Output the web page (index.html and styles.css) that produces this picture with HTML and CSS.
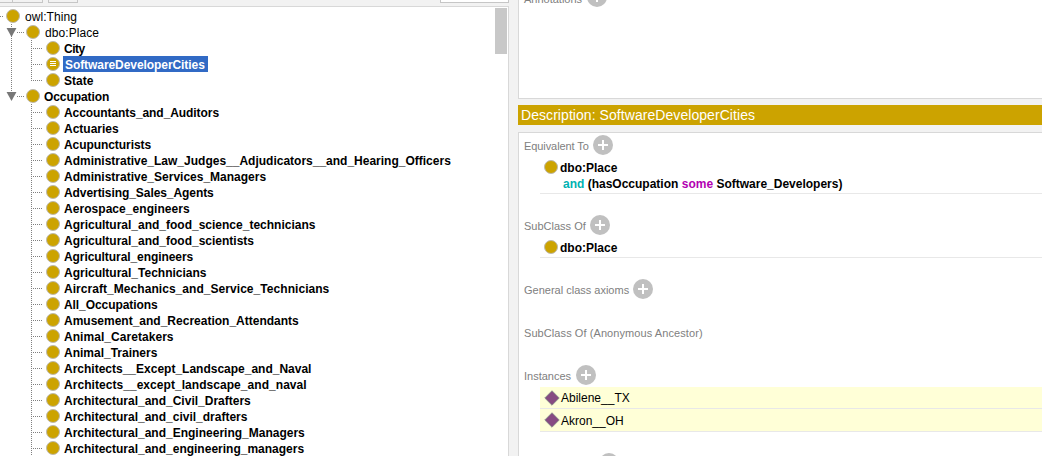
FILE: index.html
```
<!DOCTYPE html>
<html lang="en">
<head>
<meta charset="utf-8">
<title>Ontology editor</title>
<link rel="stylesheet" href="styles.css">
</head>
<body>
<main class="app">
  <section class="hierarchy">
    <div class="toolbar"><i class="tool narrow"></i><i class="tool"></i><i class="tool spaced"></i><i class="search"></i></div>
    <div class="tree-panel">
      <ul class="tree">
        <li class="row root"><i class="dot"></i><span class="label plain">owl:Thing</span></li>
        <li class="row branch"><i class="arrow"></i><i class="dot"></i><span class="label plain">dbo:Place</span></li>
        <li class="row leaf"><i class="dot"></i><span class="label tighter">City</span></li>
        <li class="row leaf"><i class="dot defined"></i><span class="label selected tight">SoftwareDeveloperCities</span></li>
        <li class="row leaf last"><i class="dot"></i><span class="label">State</span></li>
        <li class="row branch end"><i class="arrow"></i><i class="dot"></i><span class="label tight">Occupation</span></li>
        <li class="row leaf sub"><i class="dot"></i><span class="label tight">Accountants_and_Auditors</span></li>
        <li class="row leaf sub"><i class="dot"></i><span class="label">Actuaries</span></li>
        <li class="row leaf sub"><i class="dot"></i><span class="label tight">Acupuncturists</span></li>
        <li class="row leaf sub"><i class="dot"></i><span class="label">Administrative_Law_Judges__Adjudicators__and_Hearing_Officers</span></li>
        <li class="row leaf sub"><i class="dot"></i><span class="label">Administrative_Services_Managers</span></li>
        <li class="row leaf sub"><i class="dot"></i><span class="label tight">Advertising_Sales_Agents</span></li>
        <li class="row leaf sub"><i class="dot"></i><span class="label loose">Aerospace_engineers</span></li>
        <li class="row leaf sub"><i class="dot"></i><span class="label">Agricultural_and_food_science_technicians</span></li>
        <li class="row leaf sub"><i class="dot"></i><span class="label">Agricultural_and_food_scientists</span></li>
        <li class="row leaf sub"><i class="dot"></i><span class="label tight">Agricultural_engineers</span></li>
        <li class="row leaf sub"><i class="dot"></i><span class="label">Agricultural_Technicians</span></li>
        <li class="row leaf sub"><i class="dot"></i><span class="label loose">Aircraft_Mechanics_and_Service_Technicians</span></li>
        <li class="row leaf sub"><i class="dot"></i><span class="label tight">All_Occupations</span></li>
        <li class="row leaf sub"><i class="dot"></i><span class="label">Amusement_and_Recreation_Attendants</span></li>
        <li class="row leaf sub"><i class="dot"></i><span class="label loose">Animal_Caretakers</span></li>
        <li class="row leaf sub"><i class="dot"></i><span class="label">Animal_Trainers</span></li>
        <li class="row leaf sub"><i class="dot"></i><span class="label">Architects__Except_Landscape_and_Naval</span></li>
        <li class="row leaf sub"><i class="dot"></i><span class="label loose">Architects__except_landscape_and_naval</span></li>
        <li class="row leaf sub"><i class="dot"></i><span class="label">Architectural_and_Civil_Drafters</span></li>
        <li class="row leaf sub"><i class="dot"></i><span class="label">Architectural_and_civil_drafters</span></li>
        <li class="row leaf sub"><i class="dot"></i><span class="label">Architectural_and_Engineering_Managers</span></li>
        <li class="row leaf sub"><i class="dot"></i><span class="label">Architectural_and_engineering_managers</span></li>
      </ul>
      <i class="scroll-thumb"></i>
    </div>
  </section>
  <section class="details">
    <div class="annotations"><span class="caption">Annotations</span><i class="add"></i></div>
    <h2 class="title">Description: SoftwareDeveloperCities</h2>
    <div class="description">
      <div class="heading"><span class="caption equivalent">Equivalent To</span><i class="add"></i></div>
      <div class="axiom tall"><i class="dot"></i><div class="expression">dbo:Place<br><span class="continued"><b class="and">and</b> (hasOccupation <b class="some">some</b> Software_Developers)</span></div></div>
      <div class="heading subclass"><span class="caption near">SubClass Of</span><i class="add"></i></div>
      <div class="axiom"><i class="dot"></i><div class="expression">dbo:Place</div></div>
      <div class="heading general"><span class="caption near">General class axioms</span><i class="add"></i></div>
      <div class="heading ancestor"><span class="caption wide">SubClass Of (Anonymous Ancestor)</span></div>
      <div class="heading instances"><span class="caption">Instances</span><i class="add"></i></div>
      <div class="instance-list">
        <div class="instance"><svg class="diamond" viewBox="0 0 16 16"><path d="M8 .8 15.2 8 8 15.2 .8 8Z"/></svg><span class="name">Abilene__TX</span></div>
        <div class="instance"><svg class="diamond" viewBox="0 0 16 16"><path d="M8 .8 15.2 8 8 15.2 .8 8Z"/></svg><span class="name">Akron__OH</span></div>
      </div>
      <div class="heading next"><i class="add"></i></div>
    </div>
  </section>
</main>
</body>
</html>
```
FILE: styles.css
```
* { box-sizing: border-box; }
body { margin: 0; font-family: "Liberation Sans", Arial, sans-serif; font-size: 12px; color: #000; background: #f2f2f2; }
.app { display: flex; width: 1042px; height: 456px; overflow: hidden; }

.hierarchy { width: 509px; flex: none; display: flex; flex-direction: column; }
.toolbar { display: flex; height: 6px; flex: none; }
.tool { width: 30px; height: 3px; border: 1px solid #c6c6c6; border-top: 0; border-left: 0; }
.tool.narrow { width: 13px; }
.tool.spaced { margin-left: 5px; border-left: 1px solid #c6c6c6; }
.search { width: 69px; height: 3px; margin-left: auto; background: #fff; border: 1px solid #c6c6c6; border-top: 0; }
.tree-panel { display: flex; flex: 1; min-height: 0; background: #fff; border-top: 1px solid #d8d8d8; border-right: 1px solid #d8d8d8; padding: 1px 1px 0 0; }
.tree { flex: 1; margin: 0; padding: 0; list-style: none; }
.scroll-thumb { width: 12px; height: 46px; background: #c8c8c8; }

.row { display: flex; align-items: center; height: 16px; position: relative; }
.row.root { padding-left: 6px; }
.row.branch { padding-left: 26px; }
.row.leaf { padding-left: 46px; }
.label { font-weight: bold; line-height: 16px; white-space: nowrap; margin-left: 4px; padding-top: 1px; height: 16px; }
.label.plain { font-weight: normal; margin-left: 5px; letter-spacing: .07px; }
.label.selected { background: #316ac5; color: #fff; margin-left: 3px; padding: 1px 3px 0 2px; }
.tight { letter-spacing: -.07px; }
.tighter { letter-spacing: -.5px; }
.loose { letter-spacing: .05px; }
.dot { flex: none; width: 14px; height: 14px; border: 1px solid #bdb9ae; border-radius: 50%; background: #cca300; }
.defined { padding: 3px; }
.defined::before { content: ""; display: block; width: 6px; height: 5px; background: repeating-linear-gradient(#fff 0 1px, transparent 1px 2px); }
.arrow { position: absolute; left: 6px; top: 4px; width: 11px; height: 9px; background: #777; clip-path: polygon(5% 0, 95% 0, 50% 100%); z-index: 1; }

/* dotted tree guides */
.row.root::before { content: ""; position: absolute; left: 0; top: 8px; width: 3px; height: 1px; background: repeating-linear-gradient(90deg, #808080 0 1px, transparent 1px 2px); }
.branch::before { content: ""; position: absolute; left: 17px; top: 8px; width: 7px; height: 1px; background: repeating-linear-gradient(90deg, #808080 0 1px, transparent 1px 2px); }
.branch::after, .leaf:not(.sub)::after { content: ""; position: absolute; left: 11px; top: 0; width: 1px; height: 16px; background: repeating-linear-gradient(#808080 0 1px, transparent 1px 2px); }
.branch.end::after { height: 5px; }
.leaf::before { content: ""; position: absolute; left: 31px; top: 0; width: 12px; height: 16px; background: repeating-linear-gradient(#808080 0 1px, transparent 1px 2px) 0 0 / 1px 100% no-repeat, repeating-linear-gradient(90deg, #808080 0 1px, transparent 1px 2px) 0 8px / 100% 1px no-repeat; }
.leaf.last::before { height: 9px; }

.details { flex: 1; margin-left: 9px; display: flex; flex-direction: column; min-width: 0; }
.annotations { height: 99px; flex: none; display: flex; align-items: flex-start; background: #fff; border-left: 1px solid #d8d8d8; border-bottom: 1px solid #d8d8d8; padding-left: 5px; overflow: hidden; }
.annotations .caption, .annotations .add { margin-top: -13px; }
.annotations .caption { padding-top: 5px; }
.title { margin: 6px 0 7px; height: 20px; flex: none; padding-left: 3px; background: #cca300; color: #fff; font: 14px/20px "Liberation Sans", Arial, sans-serif; letter-spacing: .06px; }
.description { flex: 1; min-height: 0; background: #fff; border-left: 1px solid #d8d8d8; border-top: 1px solid #d8d8d8; padding: 2px 0 0 5px; overflow: hidden; }
.heading { display: flex; align-items: center; height: 20px; }
.caption { color: #808080; font-size: 11px; line-height: 14px; margin-right: 5px; padding-top: 2px; white-space: nowrap; }
.equivalent { letter-spacing: -.08px; margin-right: 4px; }
.near { margin-right: 4px; }
.wide { letter-spacing: .08px; }
.add { width: 20px; height: 20px; border-radius: 50%; flex: none; background: linear-gradient(#fff, #fff) center / 10px 2px no-repeat, linear-gradient(#fff, #fff) center / 2px 10px no-repeat, #c0c0c0; }
.axiom { margin-left: 16px; padding: 5px 0 0 4px; height: 23px; border-bottom: 1px solid #e8e8e8; display: flex; }
.axiom.tall { height: 39px; }
.expression { font-weight: bold; line-height: 16px; margin-left: 2px; white-space: nowrap; }
.continued { padding-left: 3px; }
.and { color: #00b2b2; }
.some { color: #b200b2; }
.subclass { margin-top: 21px; }
.general { margin-top: 21px; }
.ancestor { margin-top: 23px; }
.instances { margin-top: 23px; }
.instance-list { margin: 2px 0 0 16px; }
.instance { height: 22px; padding-left: 4px; border-bottom: 1px solid #e8e8e8; background: #ffffd7; display: flex; align-items: center; }
.instance + .instance { height: 23px; }
.diamond { width: 16px; height: 16px; }
.diamond path { fill: #874b82; stroke: #8c8c8c; stroke-width: 1; }
.name { padding: 1px 0 0 1px; }
.next { margin-top: 21px; padding-left: 75px; }
```
